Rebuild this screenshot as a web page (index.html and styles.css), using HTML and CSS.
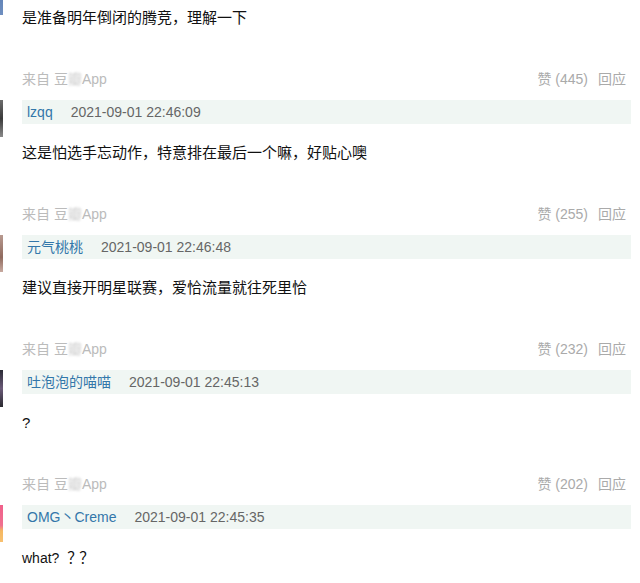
FILE: index.html
```html
<!DOCTYPE html>
<html lang="zh-CN">
<head>
<meta charset="utf-8">
<title>评论</title>
<link rel="stylesheet" href="styles.css">
</head>
<body>
<div class="list">
  <div class="comment first">
    <div class="avatar av0"></div>
    <div class="content">
      <p class="text">是准备明年倒闭的腾竞，理解一下</p>
      <div class="meta">
        <span class="from">来自 豆<span class="blur">瓣</span>App</span>
        <span class="ops"><span class="vote">赞 (445)</span><span class="reply">回应</span></span>
      </div>
    </div>
  </div>

  <div class="comment">
    <div class="avatar av1"></div>
    <div class="content">
      <div class="bar"><span class="name">lzqq</span><span class="time">2021-09-01 22:46:09</span></div>
      <p class="text">这是怕选手忘动作，特意排在最后一个嘛，好贴心噢</p>
      <div class="meta">
        <span class="from">来自 豆<span class="blur">瓣</span>App</span>
        <span class="ops"><span class="vote">赞 (255)</span><span class="reply">回应</span></span>
      </div>
    </div>
  </div>

  <div class="comment">
    <div class="avatar av2"></div>
    <div class="content">
      <div class="bar"><span class="name">元气桃桃</span><span class="time">2021-09-01 22:46:48</span></div>
      <p class="text">建议直接开明星联赛，爱恰流量就往死里恰</p>
      <div class="meta">
        <span class="from">来自 豆<span class="blur">瓣</span>App</span>
        <span class="ops"><span class="vote">赞 (232)</span><span class="reply">回应</span></span>
      </div>
    </div>
  </div>

  <div class="comment">
    <div class="avatar av3"></div>
    <div class="content">
      <div class="bar"><span class="name">吐泡泡的喵喵</span><span class="time">2021-09-01 22:45:13</span></div>
      <p class="text">?</p>
      <div class="meta">
        <span class="from">来自 豆<span class="blur">瓣</span>App</span>
        <span class="ops"><span class="vote">赞 (202)</span><span class="reply">回应</span></span>
      </div>
    </div>
  </div>

  <div class="comment last">
    <div class="avatar av4"></div>
    <div class="content">
      <div class="bar"><span class="name">OMG丶Creme</span><span class="time">2021-09-01 22:45:35</span></div>
      <p class="text"><span class="latin">what?</span><span class="fw">？？</span></p>
    </div>
  </div>
</div>
</body>
</html>
```

FILE: styles.css
```css
html, body {
  margin: 0;
  padding: 0;
  background: #fff;
  overflow: hidden;
}
body {
  font-family: "Liberation Sans", "Noto Sans CJK SC", sans-serif;
  color: #111;
  width: 640px;
  height: 583px;
}
.list {
  display: flex;
  flex-direction: column;
  margin-top: -35px;
}
.comment {
  display: flex;
  align-items: flex-start;
  height: 135px;
  flex: none;
}
.comment.last {
  height: 83px;
}
.avatar {
  width: 3px;
  height: 37px;
  flex: none;
}
.av0 { background: linear-gradient(#4a6fa8, #6f8fc0); height: 50px; }
.av1 { background: linear-gradient(#6c6c6c, #3a3a3a 50%, #8a8a8a); }
.av2 { background: linear-gradient(#b89a90, #8f6a5e 60%, #c8aaa0); }
.av3 { background: linear-gradient(#2b2b35, #6a5a78 50%, #2a2a30); }
.av4 { background: linear-gradient(#f0608a, #f07090 55%, #f5b860 70%, #f8c070); }
.content {
  margin-left: 19px;
  width: 609px;
  flex: none;
}
.bar {
  height: 24px;
  line-height: 24px;
  background: #f0f6f3;
  padding-left: 5px;
  font-size: 14px;
  display: flex;
  gap: 18px;
}
.name { color: #3377aa; }
.time { color: #666; }
.text {
  margin: 18px 0 0;
  font-size: 15px;
  line-height: 22px;
  height: 22px;
  color: #111;
}
.first .text {
  margin-top: 42px;
}
.latin {
  font-size: 14px;
}
.fw {
  margin-left: 8px;
  letter-spacing: -3px;
}
.meta {
  margin-top: 40px;
  height: 20px;
  line-height: 20px;
  font-size: 14px;
  display: flex;
  justify-content: space-between;
  padding-right: 5px;
}
.from { color: #bbb; }
.blur { filter: blur(1px); color: #ccc; }
.ops { color: #aaa; display: flex; gap: 10px; }
.reply { color: #aaa; }
```
